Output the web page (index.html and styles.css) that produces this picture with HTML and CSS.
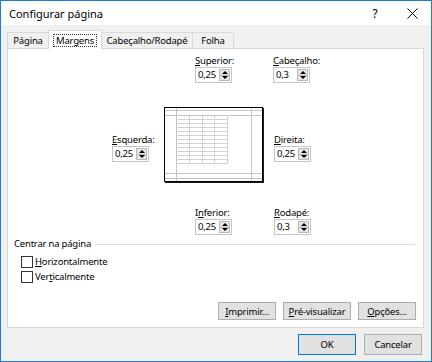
FILE: index.html
```html
<!DOCTYPE html>
<html lang="pt">
<head>
<meta charset="utf-8">
<title>Configurar página</title>
<link rel="stylesheet" href="styles.css">
</head>
<body>
<div class="dialog">
  <div class="titlebar">
    <span class="title">Configurar página</span>
    <span class="help">?</span>
    <span class="close"><svg width="11" height="11" viewBox="0 0 11 11"><path d="M0.5 0.5L10.5 10.5M10.5 0.5L0.5 10.5" stroke="#000" stroke-width="1" fill="none"/></svg></span>
  </div>
  <div class="content">
    <div class="tabs">
      <div class="tab t-pagina">Página</div>
      <div class="tab t-margens active"><span class="focus">Margens</span></div>
      <div class="tab t-cab">Cabeçalho/Rodapé</div>
      <div class="tab t-folha">Folha</div>
    </div>
    <div class="panel">
      <div class="margins">
        <div class="field f-sup">
          <div class="lbl"><u>S</u>uperior:</div>
          <div class="spin"><span class="val">0,25</span><span class="arrows"><span class="up"></span><span class="down"></span></span></div>
        </div>
        <div class="field f-cab">
          <div class="lbl"><u>C</u>abeçalho:</div>
          <div class="spin"><span class="val">0,3</span><span class="arrows"><span class="up"></span><span class="down"></span></span></div>
        </div>
        <div class="field f-esq">
          <div class="lbl"><u>E</u>squerda:</div>
          <div class="spin"><span class="val">0,25</span><span class="arrows"><span class="up"></span><span class="down"></span></span></div>
        </div>
        <svg class="preview" width="100" height="76" viewBox="0 0 100 76">
          <rect x="1" y="1" width="99" height="75" fill="#1a1a1a"/>
          <rect x="0.5" y="0.5" width="98" height="74" fill="#fff" stroke="#000"/>
          <path d="M1 3.5H98M1 8.5H98M1 66.5H98M1 71.5H98M12.5 1V74M87.5 1V74" stroke="#c4c4c4" fill="none"/>
          <path d="M25.5 9V57M38.5 9V57M50.5 9V57M63.5 9V57M12 12.5H64M12 16.5H64M12 20.5H64M12 24.5H64M12 28.5H64M12 32.5H64M12 36.5H64M12 40.5H64M12 44.5H64M12 48.5H64M12 52.5H64M12 56.5H64" stroke="#d2d2d2" fill="none"/>
        </svg>
        <div class="field f-dir">
          <div class="lbl"><u>D</u>ireita:</div>
          <div class="spin"><span class="val">0,25</span><span class="arrows"><span class="up"></span><span class="down"></span></span></div>
        </div>
        <div class="field f-inf">
          <div class="lbl">I<u>n</u>ferior:</div>
          <div class="spin"><span class="val">0,25</span><span class="arrows"><span class="up"></span><span class="down"></span></span></div>
        </div>
        <div class="field f-rod">
          <div class="lbl"><u>R</u>odapé:</div>
          <div class="spin"><span class="val">0,3</span><span class="arrows"><span class="up"></span><span class="down"></span></span></div>
        </div>
      </div>
      <div class="group"><span>Centrar na página</span><span class="rule"></span></div>
      <div class="checks">
        <div class="check"><span class="box"></span><span><u>H</u>orizontalmente</span></div>
        <div class="check"><span class="box"></span><span>Ver<u>t</u>icalmente</span></div>
      </div>
      <div class="btnrow">
        <div class="btn b-imp"><u>I</u>mprimir...</div>
        <div class="btn b-pre"><u>P</u>ré-visualizar</div>
        <div class="btn b-opc"><u>O</u>pções...</div>
      </div>
    </div>
    <div class="footer">
      <div class="btn big default">OK</div>
      <div class="btn big">Cancelar</div>
    </div>
  </div>
</div>
</body>
</html>
```

FILE: styles.css
```css
* { box-sizing: border-box; }
html, body { margin: 0; padding: 0; }
body {
  width: 432px;
  height: 362px;
  overflow: hidden;
  font-family: "Noto Sans", sans-serif;
  font-size: 9.5px;
  letter-spacing: -0.2px;
  color: #000;
  background: #fff;
}
u { text-underline-offset: 1px; }
.dialog {
  width: 432px;
  height: 362px;
  border: 1px solid #1e7bd5;
  background: #f0f0f0;
  display: flex;
  flex-direction: column;
}
.titlebar {
  height: 24px;
  flex: none;
  background: #fff;
  display: flex;
  align-items: center;
  padding-left: 8px;
}
.title { flex: 1; font-size: 11px; letter-spacing: 0; }
.help { width: 16px; text-align: center; font-size: 12px; margin-right: 10px; letter-spacing: 0; }
.close { width: 38px; display: flex; justify-content: center; }
.close svg { display: block; }

.content { flex: 1; display: flex; flex-direction: column; }

.tabs {
  display: flex;
  align-items: flex-end;
  padding: 5px 0 0 6px;
  height: 24px;
  margin-bottom: -1px;
  position: relative;
  z-index: 1;
}
.tab {
  height: 16px;
  margin-bottom: 1px;
  border: 1px solid #d9d9d9;
  border-bottom: none;
  background: #f0f0f0;
  display: flex;
  align-items: center;
  justify-content: center;
  margin-left: -1px;
}
.t-pagina { width: 42px; margin-left: 0; }
.t-margens { width: 54px; }
.t-cab { width: 92px; }
.t-folha { width: 42px; }
.tab.active {
  height: 19px;
  margin-bottom: 0;
  background: #fff;
}
.focus { border: 1px dotted #333; padding: 0 2px; line-height: 11px; }

.panel {
  height: 280px;
  margin: 0 7px 0 6px;
  background: #fff;
  border: 1px solid #d9d9d9;
  display: flex;
  flex-direction: column;
}

.margins {
  display: grid;
  grid-template-columns: 52px 109px auto;
  grid-template-rows: 28px 76px 28px;
  row-gap: 24px;
  margin-left: 104px;
  padding-top: 6px;
}
.field { display: flex; flex-direction: column; }
.lbl { line-height: 12px; height: 12px; white-space: nowrap; }
.f-sup { grid-column: 2; grid-row: 1; padding-left: 31px; }
.f-cab { grid-column: 3; grid-row: 1; }
.f-esq { grid-column: 1; grid-row: 2; margin-top: 27px; }
.preview { grid-column: 2; grid-row: 2; display: block; }
.f-dir { grid-column: 3; grid-row: 2; margin-top: 27px; padding-left: 1px; }
.f-inf { grid-column: 2; grid-row: 3; padding-left: 31px; }
.f-rod { grid-column: 3; grid-row: 3; padding-left: 1px; }

.spin {
  display: flex;
  width: 37px;
  height: 16px;
  border: 1px solid #c6c6c6;
  background: #fff;
}
.val { flex: 1; padding-left: 2px; line-height: 14px; }
.arrows {
  width: 11px;
  margin: 1px;
  display: flex;
  flex-direction: column;
}
.up, .down {
  flex: 1;
  background: #e6e6e6;
  border: 1px solid #b9b9b9;
  display: flex;
  align-items: center;
  justify-content: center;
}
.down { border-top: none; }
.up::after {
  content: "";
  border-left: 3px solid transparent;
  border-right: 3px solid transparent;
  border-bottom: 3px solid #000;
}
.down::after {
  content: "";
  border-left: 3px solid transparent;
  border-right: 3px solid transparent;
  border-top: 3px solid #000;
}

.group {
  display: flex;
  align-items: center;
  margin-top: 3px;
  padding: 0 8px 0 6px;
  line-height: 12px;
}
.rule { flex: 1; height: 1px; background: #dcdcdc; margin-left: 4px; }

.checks { margin-top: 4px; padding-left: 13px; }
.check { display: flex; align-items: center; height: 15px; gap: 2px; }
.box { width: 12px; height: 12px; border: 1px solid #333; background: #fff; }

.btnrow {
  margin-top: auto;
  display: flex;
  justify-content: flex-end;
  gap: 7px;
  padding: 0 7px 7px 0;
}
.btn {
  height: 18px;
  background: #e1e1e1;
  border: 1px solid #adadad;
  display: flex;
  align-items: center;
  justify-content: center;
  white-space: nowrap;
}
.b-imp { width: 58px; }
.b-pre { width: 68px; }
.b-opc { width: 58px; }

.footer {
  display: flex;
  justify-content: flex-end;
  gap: 8px;
  padding: 6px 9px 0 0;
}
.btn.big { width: 58px; height: 21px; }
.btn.default { border-color: #0078d7; }
```
